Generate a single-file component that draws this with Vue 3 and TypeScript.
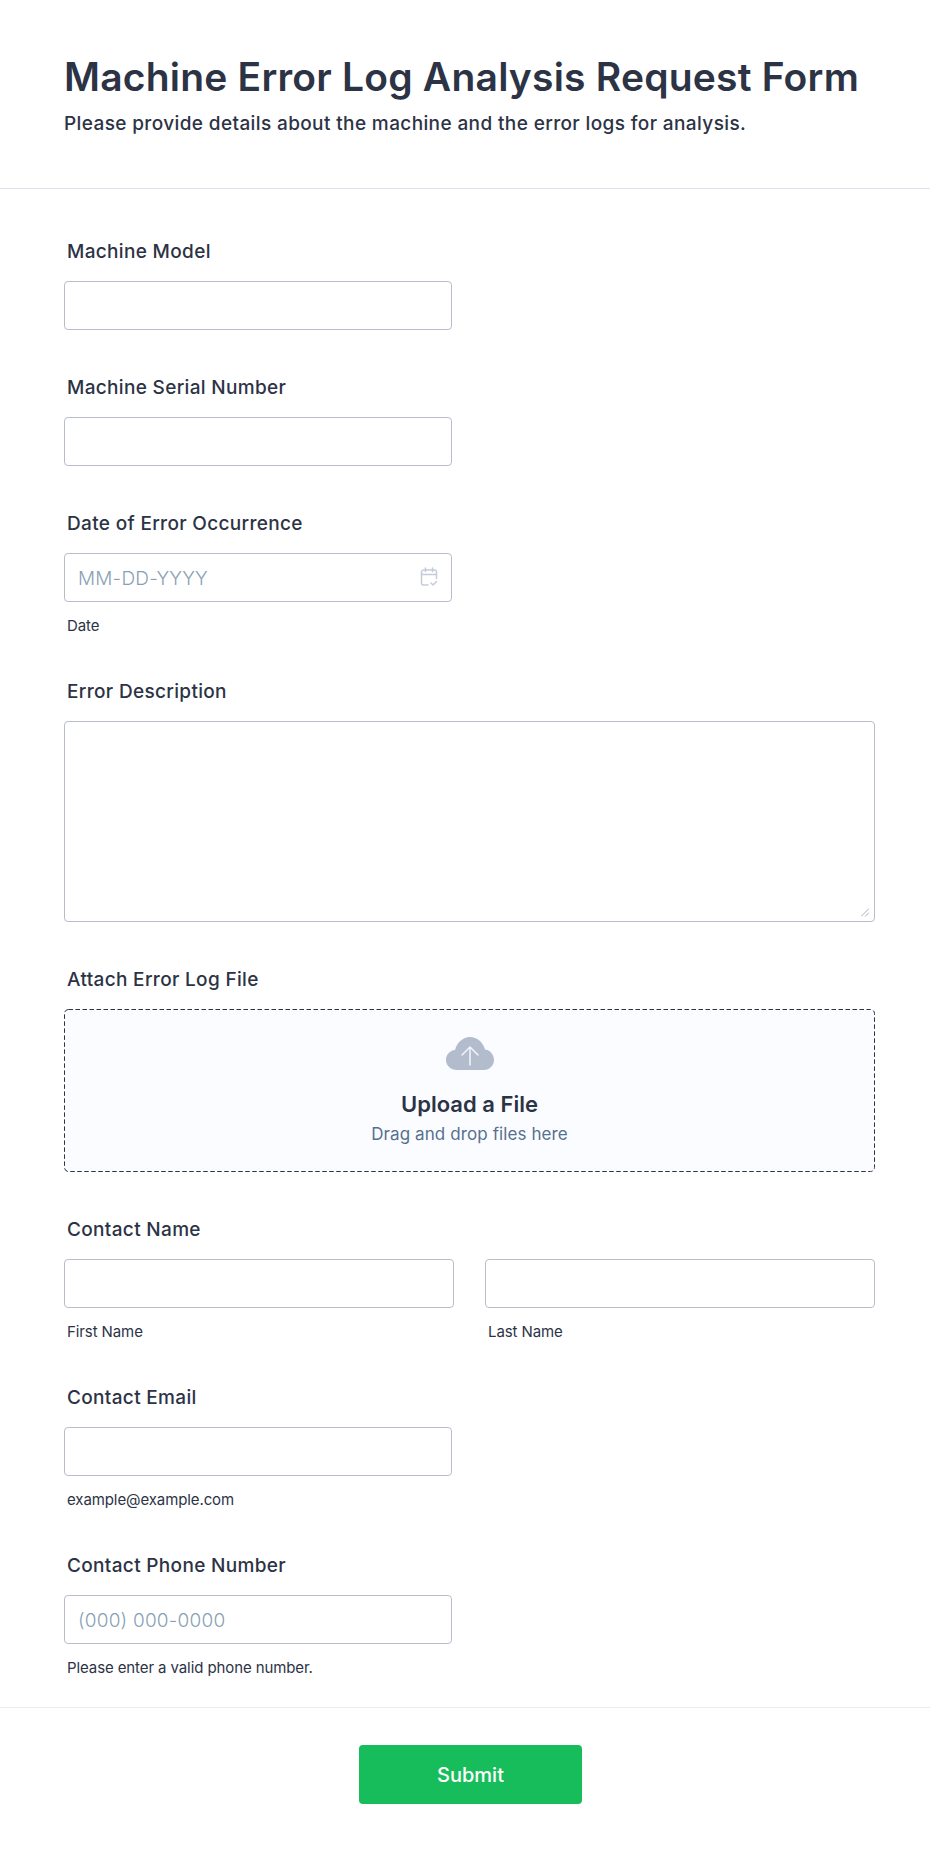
<script setup lang="ts">
const footerText: string = 'Submit'
</script>

<template>
  <main class="form">
    <header class="head">
      <h1>Machine Error Log Analysis Request Form</h1>
      <p>Please provide details about the machine and the error logs for analysis.</p>
    </header>
    <section class="body">
      <div class="field">
        <label>Machine Model</label>
        <input class="ctl short" type="text" />
      </div>
      <div class="field">
        <label>Machine Serial Number</label>
        <input class="ctl short" type="text" />
      </div>
      <div class="field">
        <label>Date of Error Occurrence</label>
        <div class="date short">
          <input class="ctl full" type="text" placeholder="MM-DD-YYYY" />
          <svg class="cal" viewBox="0 0 20 20" width="20" height="20" fill="none" stroke="#c5cbd8" stroke-width="1.5" stroke-linecap="round" stroke-linejoin="round">
            <path d="M9 18H4.500a2 2 0 0 1-2-2V5a2 2 0 0 1 2-2h11a2 2 0 0 1 2 2v6.500" />
            <path d="M6.500 1v3.500M13.500 1v3.500M2.500 7.500h15" />
            <path d="M12 16l2 2 3.500-3.500" />
          </svg>
        </div>
        <small>Date</small>
      </div>
      <div class="field">
        <label>Error Description</label>
        <div class="area-wrap">
          <textarea class="ctl full area"></textarea>
          <svg class="grip" viewBox="0 0 8 9" width="8" height="9" fill="none" stroke="#a9adb5" stroke-width="1">
            <path d="M8 0.500L0 8.500M8 4.500L4 8.500" />
          </svg>
        </div>
      </div>
      <div class="field">
        <label>Attach Error Log File</label>
        <div class="upload">
          <svg class="dash" width="811" height="163" fill="none">
            <rect x="0.5" y="0.5" width="810" height="162" rx="4" stroke="#2c3345" stroke-width="1" stroke-dasharray="4.500 2.500" />
          </svg>
          <svg class="cloud" viewBox="0 0 48 33" width="48" height="33">
            <path fill="#b2bccd" d="M11 33C4.500 33 0 28.500 0 23C0 17.500 4 13.500 9 13C11 5.500 17 0 24 0C31 0 37 5 39 12.500C44 13 48 17.500 48 23C48 28.500 43.500 33 38 33Z" />
            <path fill="none" stroke="#f3f5f9" stroke-width="1.500" stroke-linecap="round" stroke-linejoin="round" d="M24 28V10M16 18l8-8 8 8" />
          </svg>
          <strong>Upload a File</strong>
          <span>Drag and drop files here</span>
        </div>
      </div>
      <div class="field">
        <label>Contact Name</label>
        <div class="names">
          <div class="col">
            <input class="ctl full" type="text" />
            <small>First Name</small>
          </div>
          <div class="col">
            <input class="ctl full" type="text" />
            <small>Last Name</small>
          </div>
        </div>
      </div>
      <div class="field">
        <label>Contact Email</label>
        <input class="ctl short" type="email" />
        <small>example@example.com</small>
      </div>
      <div class="field">
        <label>Contact Phone Number</label>
        <input class="ctl short" type="tel" placeholder="(000) 000-0000" />
        <small>Please enter a valid phone number.</small>
      </div>
    </section>
    <footer class="foot">
      <button type="button">{{ footerText }}</button>
    </footer>
  </main>
</template>

<style>
html, body { margin: 0; background: #fff; }
</style>

<style scoped>
.form {
  width: 930px;
  min-height: 1854px;
  font-family: Inter, "Liberation Sans", sans-serif;
  color: #2c3345;
  box-sizing: border-box;
}
.head {
  height: 189px;
  padding: 53px 64px 0;
  box-sizing: border-box;
  border-bottom: 1px solid #dfe1ea;
}
h1 {
  margin: 0;
  font-size: 39px;
  line-height: 48px;
  font-weight: 600;
  letter-spacing: 0.21px;
  white-space: nowrap;
}
.head p {
  margin: 11px 0 0;
  font-size: 19px;
  line-height: 24px;
  font-weight: 450;
  letter-spacing: 0.38px;
}
.body {
  padding: 48px 55px 0 64px;
}
.field {
  display: flex;
  flex-direction: column;
  align-items: flex-start;
  margin-bottom: 43px;
}
.field:last-child { margin-bottom: 31px; }
label {
  display: block;
  margin: 1px 0 15px 3px;
  font-size: 19px;
  line-height: 28px;
  font-weight: 450;
  letter-spacing: 0.33px;
}
.ctl {
  display: block;
  height: 49px;
  box-sizing: border-box;
  border: 1px solid #b8bdc9;
  border-radius: 4px;
  background: #fff;
  padding: 2px 13px 0;
  font-family: Inter, "Liberation Sans", sans-serif;
  font-size: 19px;
  font-weight: 300;
  letter-spacing: 0.2px;
  color: #2c3345;
  outline: none;
  margin: 0;
}
.ctl::placeholder { color: #8a9fb5; opacity: 1; }
.short { width: 388px; }
.full { width: 100%; }
.date { position: relative; }
.cal { position: absolute; right: 13px; top: 14px; }
.area-wrap { position: relative; width: 100%; }
.area { height: 201px; resize: none; }
.grip { position: absolute; right: 6px; bottom: 5px; }
small {
  display: block;
  margin: 16px 0 0 3px;
  font-size: 15px;
  line-height: 16px;
  font-weight: 400;
  letter-spacing: -0.1px;
}
.upload {
  position: relative;
  width: 100%;
  height: 163px;
  box-sizing: border-box;
  border-radius: 4px;
  background: #fbfcff;
  display: flex;
  flex-direction: column;
  align-items: center;
  padding-top: 28px;
}
.dash { position: absolute; left: 0; top: 0; }
.cloud { display: block; }
.upload strong {
  margin-top: 20px;
  font-size: 22px;
  line-height: 28px;
  font-weight: 600;
}
.upload span {
  margin-top: 4px;
  font-size: 17px;
  line-height: 24px;
  letter-spacing: 0.1px;
  color: #57708f;
}
.names {
  width: 100%;
  display: grid;
  grid-template-columns: 390px 390px;
  column-gap: 31px;
}
.foot {
  border-top: 1px solid #eaebf2;
  padding: 37px 0 0 11px;
  display: flex;
  justify-content: center;
}
button {
  width: 223px;
  height: 59px;
  border: 0;
  border-radius: 4px;
  background: #18bd5b;
  color: #fff;
  font-family: Inter, "Liberation Sans", sans-serif;
  font-size: 20px;
  font-weight: 450;
}
</style>
